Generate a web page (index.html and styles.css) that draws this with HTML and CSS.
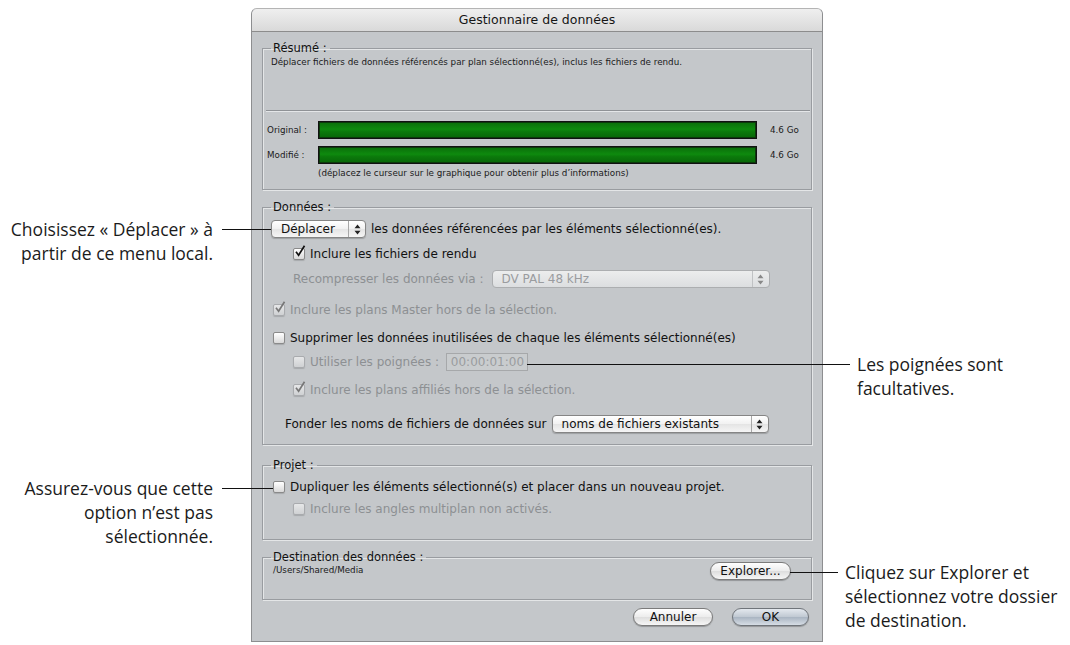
FILE: index.html
```html
<!DOCTYPE html>
<html lang="fr">
<head>
<meta charset="utf-8">
<title>Gestionnaire de données</title>
<link rel="stylesheet" href="styles.css">
</head>
<body>
<div class="stage">
  <div class="window">
    <div class="titlebar">Gestionnaire de données</div>
    <div class="content">

      <fieldset class="group group-summary">
        <legend>Résumé :</legend>
        <div class="summary-desc">Déplacer fichiers de données référencés par plan sélectionné(es), inclus les fichiers de rendu.</div>
        <div class="divider"></div>
        <div class="meters">
          <div class="meter-row">
            <span class="meter-label">Original :</span>
            <span class="meter-bar"></span>
            <span class="meter-value">4.6 Go</span>
          </div>
          <div class="meter-row">
            <span class="meter-label">Modifié :</span>
            <span class="meter-bar"></span>
            <span class="meter-value">4.6 Go</span>
          </div>
        </div>
        <div class="summary-hint">(déplacez le curseur sur le graphique pour obtenir plus d’informations)</div>
      </fieldset>

      <fieldset class="group group-data">
        <legend>Données :</legend>
        <div class="row row-action">
          <span class="popup popup-action">
            <span class="popup-label">Déplacer</span>
            <span class="popup-arrows"><svg width="7" height="11" viewBox="0 0 7 11"><path d="M3.5 0.5 L6.5 4.3 H0.5 Z M3.5 10.5 L6.5 6.7 H0.5 Z" fill="#222"/></svg></span>
          </span>
          <span class="row-text">les données référencées par les éléments sélectionné(es).</span>
        </div>
        <div class="row row-render indent-2">
          <span class="cb"><svg class="tick" width="14" height="14" viewBox="0 0 14 14"><path d="M3 6.8 L5.6 10.2 L11.5 0.8" fill="none" stroke="#111" stroke-width="1.7"/></svg></span>
          <span>Inclure les fichiers de rendu</span>
        </div>
        <div class="row row-recompress indent-2 disabled">
          <span>Recompresser les données via :</span>
          <span class="popup popup-codec">
            <span class="popup-label">DV PAL 48 kHz</span>
            <span class="popup-arrows"><svg width="7" height="11" viewBox="0 0 7 11"><path d="M3.5 0.5 L6.5 4.3 H0.5 Z M3.5 10.5 L6.5 6.7 H0.5 Z" fill="#888"/></svg></span>
          </span>
        </div>
        <div class="row row-master indent-1 disabled">
          <span class="cb"><svg class="tick" width="14" height="14" viewBox="0 0 14 14"><path d="M3 6.8 L5.6 10.2 L11.5 0.8" fill="none" stroke="#777" stroke-width="1.7"/></svg></span>
          <span>Inclure les plans Master hors de la sélection.</span>
        </div>
        <div class="row row-delete indent-1">
          <span class="cb"></span>
          <span>Supprimer les données inutilisées de chaque les éléments sélectionné(es)</span>
        </div>
        <div class="row row-handles indent-2 disabled">
          <span class="cb"></span>
          <span>Utiliser les poignées :</span>
          <span class="timecode">00:00:01:00</span>
        </div>
        <div class="row row-affiliated indent-2 disabled">
          <span class="cb"><svg class="tick" width="14" height="14" viewBox="0 0 14 14"><path d="M3 6.8 L5.6 10.2 L11.5 0.8" fill="none" stroke="#777" stroke-width="1.7"/></svg></span>
          <span>Inclure les plans affiliés hors de la sélection.</span>
        </div>
        <div class="row row-names">
          <span>Fonder les noms de fichiers de données sur</span>
          <span class="popup popup-names">
            <span class="popup-label">noms de fichiers existants</span>
            <span class="popup-arrows"><svg width="7" height="11" viewBox="0 0 7 11"><path d="M3.5 0.5 L6.5 4.3 H0.5 Z M3.5 10.5 L6.5 6.7 H0.5 Z" fill="#222"/></svg></span>
          </span>
        </div>
      </fieldset>

      <fieldset class="group group-project">
        <legend>Projet :</legend>
        <div class="row row-duplicate indent-1">
          <span class="cb"></span>
          <span>Dupliquer les éléments sélectionné(s) et placer dans un nouveau projet.</span>
        </div>
        <div class="row row-angles indent-2 disabled">
          <span class="cb"></span>
          <span>Inclure les angles multiplan non activés.</span>
        </div>
      </fieldset>

      <fieldset class="group group-dest">
        <legend>Destination des données :</legend>
        <div class="dest-row">
          <span class="dest-path">/Users/Shared/Media</span>
          <span class="btn btn-browse">Explorer...</span>
        </div>
      </fieldset>

      <div class="dialog-buttons">
        <span class="btn btn-cancel">Annuler</span>
        <span class="btn btn-ok">OK</span>
      </div>
    </div>
  </div>

  <div class="callout callout-move">Choisissez « Déplacer » à<br>partir de ce menu local.</div>
  <div class="leader leader-move"></div>

  <div class="callout callout-project">Assurez-vous que cette<br>option n’est pas<br>sélectionnée.</div>
  <div class="leader leader-project"></div>

  <div class="callout callout-handles">Les poignées sont<br>facultatives.</div>
  <div class="leader leader-handles"></div>

  <div class="callout callout-browse">Cliquez sur Explorer et<br>sélectionnez votre dossier<br>de destination.</div>
  <div class="leader leader-browse"></div>
</div>
</body>
</html>
```

FILE: styles.css
```css
html, body {
  margin: 0;
  padding: 0;
  background: #ffffff;
}

body {
  font-family: "DejaVu Sans", "Noto Sans", sans-serif;
  color: #111;
}

.stage {
  position: relative;
  width: 1070px;
  height: 645px;
  overflow: hidden;
}

/* ---------- window ---------- */
.window {
  margin: 8px 0 0 251px;
  width: 572px;
  height: 634px;
  box-sizing: border-box;
  border: 1px solid #8d8e90;
  border-top-color: #b4b4b4;
  border-radius: 6px 6px 0 0;
  background: #c4c7ca;
  display: flex;
  flex-direction: column;
}

.titlebar {
  height: 22px;
  line-height: 22px;
  border-bottom: 1px solid #8c8c8c;
  border-radius: 5px 5px 0 0;
  background: linear-gradient(#efefef, #d9d9d9);
  text-align: center;
  font-size: 12.5px;
  color: #151515;
}

.content {
  padding: 9px 10px 0 10px;
  display: flex;
  flex-direction: column;
}

/* ---------- groups ---------- */
.group {
  margin: 0;
  padding: 0;
  min-width: 0;
  border: 1px solid #999ca0;
  box-shadow: 1px 1px 0 rgba(255, 255, 255, 0.55), inset 1px 1px 0 rgba(255, 255, 255, 0.55);
}

.group legend {
  margin-left: 8px;
  padding: 0 3px 0 2px;
  font-size: 11.5px;
  line-height: 14px;
  color: #111;
}

.group-data { margin-top: 10px; padding-bottom: 11px; }
.group-project { margin-top: 13px; padding-bottom: 21px; }
.group-dest { margin-top: 10px; padding-bottom: 19px; }

/* ---------- summary ---------- */
.summary-desc {
  height: 55px;
  box-sizing: border-box;
  padding: 2px 0 0 8px;
  font-size: 8.75px;
  line-height: 11px;
  color: #1a1a1a;
}

.divider {
  height: 1px;
  margin: 0 1px 0 3px;
  background: #8f9296;
  border-bottom: 1px solid #e4e6e8;
}

.meters {
  padding: 9px 0 0 4px;
}

.meter-row {
  display: flex;
  align-items: center;
  height: 18px;
  font-size: 8.75px;
  color: #1a1a1a;
}

.meter-row + .meter-row {
  margin-top: 7px;
}

.meter-label {
  width: 51px;
  white-space: nowrap;
}

.meter-bar {
  width: 439px;
  height: 18px;
  box-sizing: border-box;
  border: 1px solid #111;
  box-shadow: inset 0 0 0 1px #0b3a0b;
  background: linear-gradient(#0a6d0a, #0e8a0e 45%, #0b7a0b 60%, #086608);
}

.meter-value {
  margin-left: 13px;
  white-space: nowrap;
}

.summary-hint {
  margin: 4px 0 10px 55px;
  font-size: 8.75px;
  line-height: 11px;
  color: #1a1a1a;
}

/* ---------- rows ---------- */
.row {
  display: flex;
  align-items: center;
  height: 18px;
  font-size: 12px;
  white-space: nowrap;
}

.indent-1 { margin-left: 10px; }
.indent-2 { margin-left: 30px; }

.row-action { margin: 6px 0 0 8px; }
.row-render { margin-top: 7px; }
.row-recompress { margin-top: 7px; }
.row-master { margin-top: 13px; }
.row-delete { margin-top: 10px; }
.row-handles { margin-top: 6px; }
.row-affiliated { margin-top: 10px; }
.row-names { margin: 16px 0 0 22px; }
.row-duplicate { margin-top: 6px; }
.row-angles { margin-top: 4px; }

.disabled { color: #8d9093; }

.row-text { margin-left: 5px; }

/* checkbox */
.cb {
  position: relative;
  flex: none;
  width: 12px;
  height: 12px;
  box-sizing: border-box;
  margin-right: 5px;
  border: 1px solid #8a8a8a;
  border-radius: 2px;
  background: linear-gradient(#ffffff, #d9d9d9);
  box-shadow: 0 1px 1px rgba(0, 0, 0, 0.15);
}

.disabled .cb {
  border-color: #a9abae;
  background: linear-gradient(#e6e7e8, #cfd1d3);
}

.tick {
  position: absolute;
  left: -1px;
  top: -4px;
}

/* popup menus */
.popup {
  height: 18px;
  box-sizing: border-box;
  display: flex;
  align-items: center;
  border: 1px solid #858585;
  border-radius: 4px;
  background: linear-gradient(#ffffff, #f1f1f1 50%, #e4e4e4 51%, #f5f5f5);
  box-shadow: 0 1px 1px rgba(0, 0, 0, 0.2);
  color: #111;
}

.popup-label {
  flex: 1;
  padding-left: 9px;
}

.popup-arrows {
  width: 16px;
  height: 100%;
  border-left: 1px solid #a7a7a7;
  display: flex;
  align-items: center;
  justify-content: center;
}

.popup-action { width: 95px; }
.popup-codec {
  width: 278px;
  margin-left: 8px;
  color: #9a9c9f;
  border-color: #acaeb0;
  background: linear-gradient(#eceded, #dcdee0);
  box-shadow: none;
}
.popup-codec .popup-arrows { border-left-color: #c0c2c4; }
.popup-names { width: 217px; margin-left: 5px; }

.timecode {
  margin-left: 7px;
  width: 82px;
  height: 18px;
  box-sizing: border-box;
  border: 1px solid #a6a8aa;
  background: #c9ccce;
  text-align: right;
  padding-right: 3px;
  line-height: 16px;
  color: #9a9c9f;
}

/* destination */
.dest-row {
  display: flex;
  justify-content: space-between;
  align-items: flex-start;
  margin-top: -2px;
  padding: 0 20px 0 10px;
}

.dest-path {
  margin-top: 3px;
  font-size: 8.75px;
  line-height: 11px;
  color: #1a1a1a;
}

/* aqua buttons */
.btn {
  height: 18px;
  box-sizing: border-box;
  display: flex;
  align-items: center;
  justify-content: center;
  border: 1px solid #7b7b7b;
  border-radius: 9px;
  background: linear-gradient(#fefefe, #ececec 50%, #dedede 52%, #f6f6f6);
  box-shadow: 0 1px 1px rgba(0, 0, 0, 0.25);
  font-size: 12px;
  color: #111;
}

.btn-browse { width: 81px; }

.dialog-buttons {
  display: flex;
  justify-content: flex-end;
  gap: 19px;
  margin: 8px 3px 0 0;
}

.btn-cancel { width: 80px; }
.btn-ok {
  width: 77px;
  background: linear-gradient(#e3e8ee, #bfc8d2 50%, #aab5c2 52%, #d6dde5);
  border-color: #6f747a;
}

/* ---------- callouts ---------- */
.callout {
  position: absolute;
  font-family: "Open Sans", "Noto Sans", sans-serif;
  font-size: 17.5px;
  line-height: 24px;
  color: #1b1b1b;
  white-space: nowrap;
}

.callout-move { right: 857px; top: 217px; text-align: right; }
.callout-project { right: 857px; top: 476px; text-align: right; }
.callout-handles { left: 857px; top: 352px; }
.callout-browse { left: 845px; top: 560px; }

.leader {
  position: absolute;
  height: 1px;
  background: #111;
}

.leader-move { left: 222px; top: 229px; width: 49px; }
.leader-project { left: 222px; top: 488px; width: 51px; }
.leader-handles { left: 527px; top: 364px; width: 323px; }
.leader-browse { left: 790px; top: 572px; width: 48px; }
```
